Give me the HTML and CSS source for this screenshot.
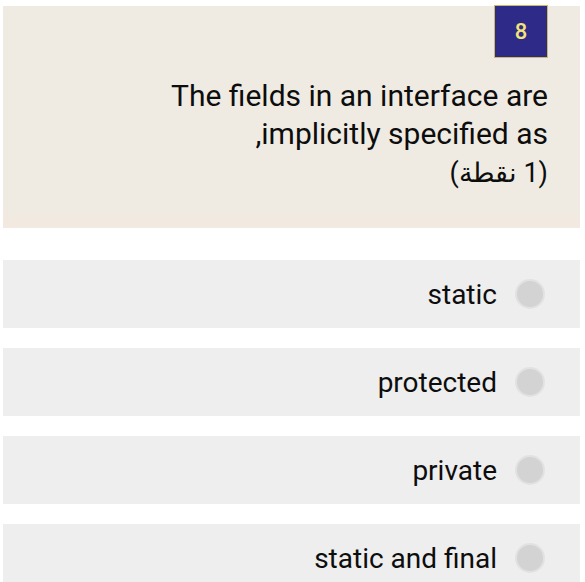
FILE: index.html
```html
<!DOCTYPE html>
<html lang="ar" dir="rtl">
<head>
  <meta charset="UTF-8" />
  <title>Question 8</title>
  <meta name="viewport" content="width=device-width, initial-scale=1.0" />
  <link rel="stylesheet" href="styles.css">
</head>
<body>

  <div class="question-card">
    <div class="badge">8</div>
    <div class="question-text">
      The fields in an interface are<br>
      implicitly specified as,<br>
      <span class="points">(1 نقطة)</span>
    </div>
  </div>

  <div class="options">
    <label class="option">
      <span class="radio"></span>
      <span>static</span>
    </label>
    <label class="option">
      <span class="radio"></span>
      <span>protected</span>
    </label>
    <label class="option">
      <span class="radio"></span>
      <span>private</span>
    </label>
    <label class="option">
      <span class="radio"></span>
      <span>static and final</span>
    </label>
  </div>

</body>
</html>
```

FILE: styles.css
```css
:root {
  --fundo-questao: #efebe3;
  --fundo-opcao: #eeeeee;
  --azul-badge: #2d2a88;
  --amarelo: #f4e37a;
  --texto: #0d0d0d;
}

body {
  font-family: Roboto, "Noto Sans", Arial, sans-serif;
  margin: 0;
  background: #ffffff;
  color: var(--texto);
}

.question-card {
  margin: 6px 5px 0 3px;
  height: 222px;
  box-sizing: border-box;
  background: var(--fundo-questao);
  border-bottom: 12px solid #f2e9e0;
  padding: 0 32px 0 0;
  display: flex;
  flex-direction: column;
  align-items: flex-start;
}

.badge {
  width: 54px;
  height: 53px;
  margin-top: -1px;
  box-sizing: border-box;
  background: var(--azul-badge);
  border: 1px solid #cdbb60;
  color: var(--amarelo);
  font-size: 22px;
  font-weight: 500;
  display: flex;
  align-items: center;
  justify-content: center;
}

.question-text {
  margin-top: 19px;
  font-size: 30px;
  line-height: 38px;
}

.points {
  font-size: 27px;
}

.options {
  margin-top: 32px;
  display: flex;
  flex-direction: column;
  gap: 20px;
}

.option {
  margin: 0 5px 0 3px;
  height: 68px;
  background: var(--fundo-opcao);
  display: flex;
  align-items: center;
  gap: 18px;
  padding-right: 35px;
  font-size: 28px;
}

.radio {
  width: 30px;
  height: 30px;
  box-sizing: border-box;
  border-radius: 50%;
  background: #d3d3d3;
  border: 2px solid #e2e2e2;
}
```
